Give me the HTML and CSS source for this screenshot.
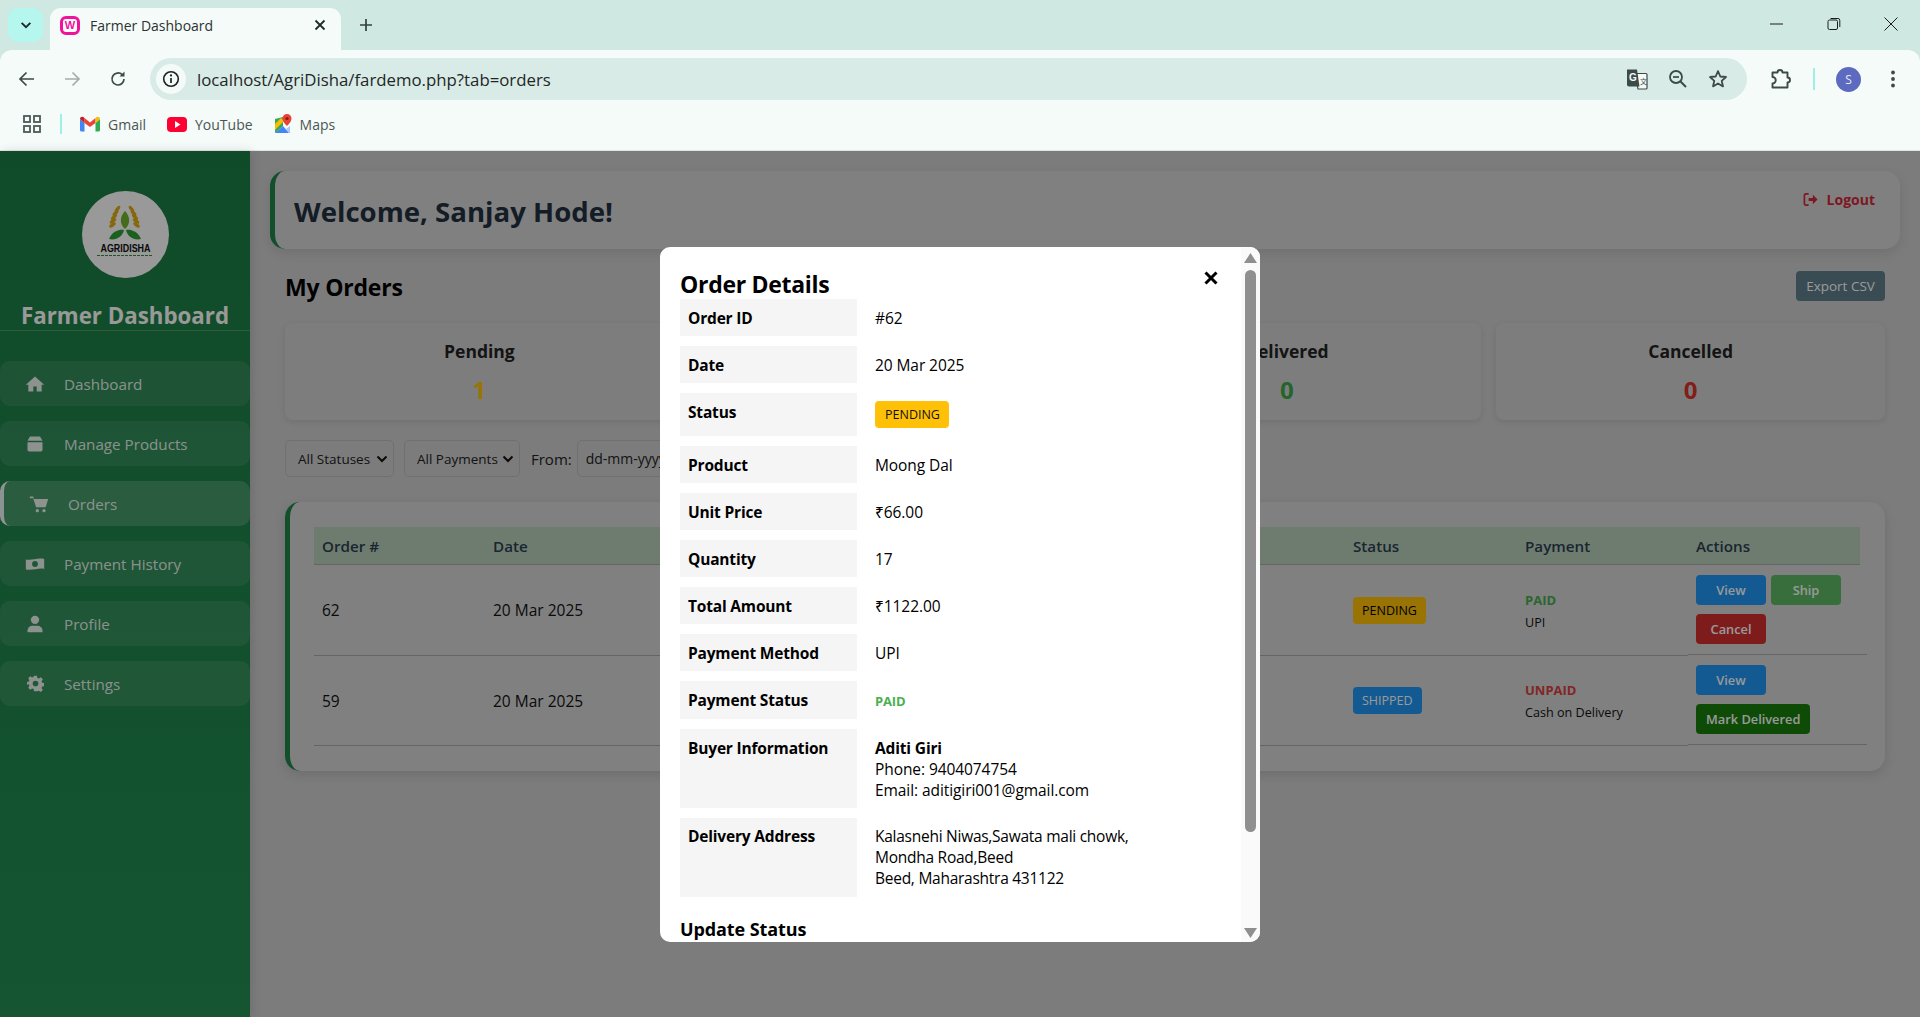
FILE: index.html
```html
<!DOCTYPE html>
<html lang="en">
<head>
<meta charset="utf-8">
<title>Farmer Dashboard</title>
<link rel="stylesheet" href="styles.css">
</head>
<body>
<header class="browser">
  <div class="tabstrip">
    <button class="tab-search"><svg viewBox="0 0 16 16" width="14" height="14"><path d="M3 5.500 8 10.500 13 5.500" fill="none" stroke="#1c2b2a" stroke-width="2.200"/></svg></button>
    <div class="tab">
      <span class="favicon">W</span>
      <span class="tab-title">Farmer Dashboard</span>
      <svg class="tab-x" viewBox="0 0 12 12" width="12" height="12"><path d="M1.500 1.500 10.500 10.500M10.500 1.500 1.500 10.500" stroke="#1f2b2a" stroke-width="1.800"/></svg>
    </div>
    <svg class="new-tab" viewBox="0 0 14 14" width="14" height="14"><path d="M7 1V13M1 7H13" stroke="#33403f" stroke-width="1.700"/></svg>
    <div class="win-controls">
      <svg viewBox="0 0 14 14" width="14" height="14"><path d="M0 7H13" stroke="#1d1d1d" stroke-width="1"/></svg>
      <svg viewBox="0 0 14 14" width="14" height="14"><rect x="1" y="3" width="9.500" height="9.500" rx="1.500" fill="none" stroke="#1d1d1d"/><path d="M3.500 1.500H11a1.800 1.800 0 0 1 1.800 1.800V10" fill="none" stroke="#1d1d1d"/></svg>
      <svg viewBox="0 0 14 14" width="14" height="14"><path d="M.5.5 13.500 13.500M13.500.5.5 13.500" stroke="#1d1d1d" stroke-width="1"/></svg>
    </div>
  </div>
  <div class="toolbar">
    <svg class="tb-icon" viewBox="0 0 18 18" width="18" height="18"><path d="M16 9H2.500M8.500 2.500 2 9l6.500 6.500" fill="none" stroke="#3c4a48" stroke-width="1.700"/></svg>
    <svg class="tb-icon" viewBox="0 0 18 18" width="18" height="18"><path d="M2 9H15.500M9.500 2.500 16 9l-6.500 6.500" fill="none" stroke="#a4adab" stroke-width="1.700"/></svg>
    <svg class="tb-icon" viewBox="0 0 18 18" width="18" height="18"><path d="M15 9a6 6 0 1 1-1.800-4.300" fill="none" stroke="#3c4a48" stroke-width="1.700"/><path d="M15.500 1.500V6.500H10.500z" fill="#3c4a48"/></svg>
    <div class="omnibox">
      <span class="info-chip"><svg viewBox="0 0 18 18" width="18" height="18"><circle cx="9" cy="9" r="7.300" fill="none" stroke="#1c2322" stroke-width="1.600"/><path d="M9 8v5" stroke="#1c2322" stroke-width="1.700"/><circle cx="9" cy="5.400" r="1.100" fill="#1c2322"/></svg></span>
      <span class="url">localhost/AgriDisha/fardemo.php?tab=orders</span>
      <span class="omni-icons">
        <svg viewBox="0 0 22 22" width="22" height="22"><path d="M9 5.500h11a1 1 0 0 1 1 1V20a1 1 0 0 1-1 1h-8z" fill="#f4faf8" stroke="#3c4a48" stroke-width="1.200"/><path d="M1 1.500h10l2.500 17H3a2 2 0 0 1-2-2z" fill="#3c4a48"/><text x="3" y="13" class="g-glyph">G</text><text x="14" y="16" class="t-glyph">文</text></svg>
        <svg viewBox="0 0 20 20" width="20" height="20"><circle cx="8" cy="8" r="6" fill="none" stroke="#3c4a48" stroke-width="1.800"/><path d="M12.500 12.500 18 18" stroke="#3c4a48" stroke-width="2"/><path d="M5 8H11" stroke="#3c4a48" stroke-width="1.700"/></svg>
        <svg viewBox="0 0 20 20" width="20" height="20"><path d="M10 2.200 12.300 7.500 18 8 13.700 11.800 15 17.400 10 14.400 5 17.400 6.300 11.800 2 8 7.700 7.500z" fill="none" stroke="#3c4a48" stroke-width="1.800" stroke-linejoin="round"/></svg>
      </span>
    </div>
    <svg class="ext-icon" viewBox="0 0 22 22" width="22" height="22"><path d="M2.500 4.500h5a2.500 2.500 0 0 1 5 0h5v5a2.500 2.500 0 0 1 0 5v5h-15v-4a2.800 2.800 0 0 0 0-6.500z" fill="none" stroke="#3c4a48" stroke-width="1.900" stroke-linejoin="round"/></svg>
    <span class="tb-sep"></span>
    <span class="avatar">S</span>
    <svg class="kebab" viewBox="0 0 6 18" width="6" height="18"><circle cx="3" cy="2.500" r="1.900" fill="#3c4a48"/><circle cx="3" cy="9" r="1.900" fill="#3c4a48"/><circle cx="3" cy="15.500" r="1.900" fill="#3c4a48"/></svg>
  </div>
  <div class="bookmarks">
    <svg class="apps" viewBox="0 0 18 18" width="18" height="18"><g fill="none" stroke="#4c5957" stroke-width="1.800"><rect x="1" y="1" width="6" height="6"/><rect x="11" y="1" width="6" height="6"/><rect x="1" y="11" width="6" height="6"/><rect x="11" y="11" width="6" height="6"/></g></svg>
    <span class="bm-sep"></span>
    <span class="bm"><svg viewBox="0 0 20 16" width="20" height="16"><path d="M0 3v11a1.500 1.500 0 0 0 1.500 1.500H4.500V7z" fill="#4285f4"/><path d="M20 3v11a1.500 1.500 0 0 1-1.500 1.500H15.500V7z" fill="#34a853"/><path d="M4.500 7V2L10 6.500 15.500 2V7L10 11z" fill="#ea4335"/><path d="M0 3C0 .8 2.700-.2 4.500 2V7z" fill="#c5221f"/><path d="M20 3c0-2.200-2.700-3.200-4.500-1V7z" fill="#fbbc04"/></svg>Gmail</span>
    <span class="bm"><svg viewBox="0 0 20 15" width="20" height="15"><rect width="20" height="15" rx="4" fill="#ff0033"/><path d="M8 4v7l5.500-3.500z" fill="#fff"/></svg>YouTube</span>
    <span class="bm"><svg viewBox="0 0 18 20" width="18" height="20"><path d="M1 5 9 3v9l-8 7z" fill="#34a853"/><path d="M1 19 9 12l6 7z" fill="#4285f4"/><path d="M1 10 7 4l3 3-9 9z" fill="#fbbc04"/><path d="M15 19l-3-4 4-3v7z" fill="#a8c7fa"/><path d="M13 0a4.500 4.500 0 0 1 4.500 4.500C17.500 8 13 12 13 12S8.500 8 8.500 4.500A4.500 4.500 0 0 1 13 0z" fill="#ea4335"/><circle cx="13" cy="4.500" r="1.600" fill="#8c1c13"/></svg>Maps</span>
  </div>
</header>

<div class="page">
  <aside class="sidebar">
    <div class="side-head">
      <svg class="logo" viewBox="0 0 87 87" width="87" height="87">
        <circle cx="43.500" cy="43.500" r="43.500" fill="#fff"/>
        <g fill="#e0ad14">
          <ellipse cx="30.500" cy="34" rx="3.800" ry="1.700" transform="rotate(-35 30.500 34)"/><ellipse cx="31" cy="30" rx="3.800" ry="1.700" transform="rotate(-35 31 30)"/><ellipse cx="32" cy="26" rx="3.800" ry="1.700" transform="rotate(-40 32 26)"/><ellipse cx="33.500" cy="22" rx="3.800" ry="1.700" transform="rotate(-45 33.500 22)"/><ellipse cx="35.500" cy="18" rx="3.800" ry="1.700" transform="rotate(-50 35.500 18)"/>
          <ellipse cx="54.500" cy="34" rx="3.800" ry="1.700" transform="rotate(35 54.500 34)"/><ellipse cx="54" cy="30" rx="3.800" ry="1.700" transform="rotate(35 54 30)"/><ellipse cx="53" cy="26" rx="3.800" ry="1.700" transform="rotate(40 53 26)"/><ellipse cx="51.500" cy="22" rx="3.800" ry="1.700" transform="rotate(45 51.500 22)"/><ellipse cx="49.500" cy="18" rx="3.800" ry="1.700" transform="rotate(50 49.500 18)"/>
        </g>
        <path d="M43 20C38 25 37 33 43 38 49 33 48 25 43 20z" fill="#74b52e"/>
        <path d="M27 48C30 40 38 38 42 39 41 45 34 50 27 48z" fill="#2fa038"/>
        <path d="M59 48C56 40 48 38 44 39 45 45 52 50 59 48z" fill="#2fa038"/>
        <text x="43.500" y="61" class="logo-text" textLength="50" lengthAdjust="spacingAndGlyphs">AGRIDISHA</text>
        <path d="M15 64.500H70" stroke="#3c8d40" stroke-width="1" stroke-dasharray="3 1"/>
      </svg>
      <h2 class="side-title">Farmer Dashboard</h2>
    </div>
    <nav class="side-nav">
      <a class="nav-item"><svg viewBox="0 0 24 24" width="20" height="20"><path d="M12 3 1 13h3v8h6v-6h4v6h6v-8h3z"/></svg>Dashboard</a>
      <a class="nav-item"><svg viewBox="0 0 24 24" width="20" height="20"><path d="M6 3h12l3 5H3zM3 10h18v9a2 2 0 0 1-2 2H5a2 2 0 0 1-2-2z"/></svg>Manage Products</a>
      <a class="nav-item nav-active"><svg viewBox="0 0 24 24" width="20" height="20"><path d="M1 3h4l.8 3H23l-3 10H8.500L5 5H1z"/><circle cx="10" cy="20" r="2"/><circle cx="18" cy="20" r="2"/></svg>Orders</a>
      <a class="nav-item"><svg viewBox="0 0 24 24" width="20" height="20"><path fill-rule="evenodd" d="M1 6.500c6 2 14-2.500 22-.5v12c-6-2-14 2.500-22 .5zM12 8.500a3.500 3.500 0 1 0 0 7 3.500 3.500 0 0 0 0-7z"/></svg>Payment History</a>
      <a class="nav-item"><svg viewBox="0 0 24 24" width="20" height="20"><circle cx="12" cy="7" r="5"/><path d="M3 22v-2a6 6 0 0 1 6-6h6a6 6 0 0 1 6 6v2z"/></svg>Profile</a>
      <a class="nav-item"><svg viewBox="0 0 24 24" width="17" height="17"><path fill-rule="evenodd" d="M10 1h4l.7 3.200 2 .8 2.800-1.700 2.800 2.800-1.700 2.800.8 2 3.200.7v4l-3.200.7-.8 2 1.700 2.800-2.800 2.800-2.800-1.700-2 .8L14 23h-4l-.7-3.200-2-.8-2.800 1.700-2.800-2.800 1.700-2.800-.8-2L-.6 14v-4l3.200-.7.8-2L1.700 4.500l2.800-2.800 2.800 1.700 2-.8zM12 8a4 4 0 1 0 0 8 4 4 0 0 0 0-8z"/></svg>Settings</a>
    </nav>
  </aside>

  <main class="main">
    <section class="welcome">
      <h1>Welcome, Sanjay Hode!</h1>
      <a class="logout"><svg viewBox="0 0 16 16" width="15" height="15"><path d="M6 2H3a1.500 1.500 0 0 0-1.500 1.500v9A1.500 1.500 0 0 0 3 14h3" fill="none" stroke="currentColor" stroke-width="1.800"/><path d="M6 6.500h4.500V3L15.500 8l-5 5V9.500H6z" fill="currentColor"/></svg>Logout</a>
    </section>
    <section class="content">
      <div class="orders-head">
        <h2>My Orders</h2>
        <button class="export">Export CSV</button>
      </div>
      <div class="stats">
        <div class="stat"><h4>Pending</h4><strong class="c-pending">1</strong></div>
        <div class="stat"></div>
        <div class="stat"><h4>Delivered</h4><strong class="c-delivered">0</strong></div>
        <div class="stat"><h4>Cancelled</h4><strong class="c-cancelled">0</strong></div>
      </div>
      <div class="filters">
        <select class="sel-status"><option>All Statuses</option></select>
        <select class="sel-pay"><option>All Payments</option></select>
        <label>From:</label>
        <input class="date" type="text" value="dd-mm-yyyy" readonly>
      </div>
      <div class="table-card">
        <table class="orders">
          <colgroup><col class="w-order"><col class="w-date"><col class="w-mid"><col class="w-status"><col class="w-pay"><col class="w-act"></colgroup>
          <thead><tr><th>Order #</th><th>Date</th><th></th><th>Status</th><th>Payment</th><th>Actions</th></tr></thead>
          <tbody>
            <tr>
              <td>62</td><td>20 Mar 2025</td><td></td>
              <td><span class="badge badge-pending">PENDING</span></td>
              <td><b class="paid">PAID</b><small>UPI</small></td>
              <td class="act-cell"><div class="row-actions"><button class="btn b-blue">View</button><button class="btn b-green">Ship</button><button class="btn b-red">Cancel</button></div></td>
            </tr>
            <tr>
              <td>59</td><td>20 Mar 2025</td><td></td>
              <td><span class="badge badge-shipped">SHIPPED</span></td>
              <td><b class="unpaid">UNPAID</b><small>Cash on Delivery</small></td>
              <td class="act-cell"><div class="row-actions"><button class="btn b-blue">View</button><button class="btn b-dark">Mark Delivered</button></div></td>
            </tr>
          </tbody>
        </table>
      </div>
    </section>
  </main>

  <div class="overlay">
    <div class="modal">
      <svg class="modal-x" viewBox="0 0 14 14" width="14" height="14"><path d="M1.500 1.500 12.500 12.500M12.500 1.500 1.500 12.500" stroke="#000" stroke-width="3"/></svg>
      <h2>Order Details</h2>
      <dl class="details">
        <dt>Order ID</dt><dd>#62</dd>
        <dt>Date</dt><dd>20 Mar 2025</dd>
        <dt>Status</dt><dd class="dd-badge"><span class="badge badge-modal">PENDING</span></dd>
        <dt>Product</dt><dd>Moong Dal</dd>
        <dt>Unit Price</dt><dd>₹66.00</dd>
        <dt>Quantity</dt><dd>17</dd>
        <dt>Total Amount</dt><dd>₹1122.00</dd>
        <dt>Payment Method</dt><dd>UPI</dd>
        <dt>Payment Status</dt><dd><b class="paid-modal">PAID</b></dd>
        <dt>Buyer Information</dt><dd><b>Aditi Giri</b><br>Phone: 9404074754<br>Email: aditigiri001@gmail.com</dd>
        <dt class="dt-address">Delivery Address</dt><dd class="dd-address">Kalasnehi Niwas,Sawata mali chowk,<br>Mondha Road,Beed<br>Beed, Maharashtra 431122</dd>
      </dl>
      <h3>Update Status</h3>
      <div class="scrollbar">
        <svg viewBox="0 0 13 10" width="13" height="10"><path d="M6.500 0 13 10H0z" fill="#8f8f8f"/></svg>
        <span class="thumb"></span>
        <svg class="arrow-down" viewBox="0 0 13 10" width="13" height="10"><path d="M6.500 10 13 0H0z" fill="#8f8f8f"/></svg>
      </div>
    </div>
  </div>
</div>
</body>
</html>
```
FILE: styles.css
```css
* { box-sizing: border-box; }
html, body { margin: 0; height: 1017px; overflow: hidden; }
body { font-family: "Open Sans", "Noto Sans", "Liberation Sans", sans-serif; font-stretch: 94%; color: #222; background: #cfcfcf; }

/* browser chrome */
.browser { height: 151px; background: #cfe8e2; display: flex; flex-direction: column; border-bottom: 1px solid #dfe6e3; }
.tabstrip { height: 50px; display: flex; align-items: flex-end; padding-left: 8px; flex: none; }
.tab-search { width: 35px; height: 34px; margin-bottom: 8px; border: 0; border-radius: 10px; background: #b5f6ef; display: flex; align-items: center; justify-content: center; padding: 0; }
.tab { position: relative; width: 291px; height: 42px; margin-left: 7px; background: #f5fbf9; border-radius: 11px 11px 0 0; display: flex; align-items: center; padding: 0 15px 8px 10px; }
.favicon { width: 20px; height: 19px; border: 3px solid #f2119b; border-radius: 6px; color: #f2119b; background: #fff; font: 700 11px/13px "Liberation Sans", sans-serif; text-align: center; flex: none; }
.tab-title { font-size: 14px; margin-left: 10px; color: #2a3331; flex: 1; white-space: nowrap; }
.new-tab { margin: 0 0 18px 18px; }
.win-controls { margin: 0 22px 19px auto; display: flex; gap: 43px; }
.toolbar { height: 50px; flex: none; background: #f5fbf9; border-radius: 12px 12px 0 0; display: flex; align-items: center; padding: 8px 0 0 18px; }
.tb-icon { margin-right: 27px; flex: none; }
.tb-icon:nth-child(2) { margin-right: 28px; }
.tb-icon:nth-child(3) { margin-right: 23px; }
.omnibox { width: 1597px; height: 42px; background: #d9ebe6; border-radius: 21px; display: flex; align-items: center; padding: 0 19px 0 6px; flex: none; }
.info-chip { width: 30px; height: 30px; border-radius: 50%; background: #f3faf8; display: flex; align-items: center; justify-content: center; flex: none; }
.url { font-size: 16.800px; color: #1e2726; margin-left: 11px; white-space: nowrap; }
.omni-icons { margin-left: auto; display: flex; align-items: center; gap: 20px; }
.g-glyph { font: 700 10px "Liberation Sans", sans-serif; fill: #f4faf8; }
.t-glyph { font: 7px "Noto Sans CJK SC", sans-serif; fill: #3c4a48; }
.ext-icon { margin-left: 23px; flex: none; }
.tb-sep { width: 2px; height: 22px; background: #9ff0e4; margin-left: 21px; flex: none; }
.avatar { width: 25px; height: 25px; border-radius: 50%; background: #5c6bc0; color: #e8eaf6; font-size: 12px; line-height: 25px; text-align: center; margin-left: 21px; flex: none; }
.kebab { margin-left: 29px; flex: none; }
.bookmarks { height: 50px; flex: none; background: #f5fbf9; display: flex; align-items: center; padding: 0 0 2px 23px; font-size: 14px; color: #4a5654; }
.apps { flex: none; }
.bm-sep { width: 2px; height: 20px; background: #9ff0e4; margin: 0 18px 0 19px; flex: none; }
.bm { display: flex; align-items: center; gap: 8px; margin-right: 21px; white-space: nowrap; }

/* page */
.page { position: relative; height: 866px; display: flex; }
.sidebar { position: relative; z-index: 1; width: 250px; flex: none; background: linear-gradient(180deg, #1c7d45, #238e53); color: #fff; box-shadow: 2px 0 10px rgba(0,0,0,.12); }
.side-head { height: 180px; padding-top: 40px; border-bottom: 1px solid rgba(255,255,255,.2); display: flex; flex-direction: column; align-items: center; }
.logo { flex: none; }
.logo-text { font: 700 11px "Liberation Sans", sans-serif; fill: #111; text-anchor: middle; }
.side-title { font-size: 22.300px; line-height: 30px; font-weight: 700; margin: 23px 0 0; white-space: nowrap; }
.side-nav { display: flex; flex-direction: column; gap: 15px; padding-top: 30px; }
.nav-item { height: 45px; display: flex; align-items: center; padding-left: 25px; background: rgba(255,255,255,.09); border-radius: 10px; color: rgba(255,255,255,.9); font-size: 15.200px; }
.nav-item svg { fill: currentColor; flex: none; margin-right: 19px; }
.nav-item:last-child svg { margin: 0 20px 0 2px; }
.nav-active { background: rgba(255,255,255,.18); border-left: 4px solid rgba(255,255,255,.9); }
.main { flex: 1; min-width: 0; padding: 20px; }
.welcome { height: 78px; background: #d6d6d6; border-left: 5px solid #1e8449; border-radius: 15px; display: flex; justify-content: space-between; padding: 0 25px 0 19px; box-shadow: 0 4px 12px rgba(0,0,0,.1); }
.welcome h1 { margin: 0; font-size: 27.600px; line-height: 81px; font-weight: 700; color: #223040; white-space: nowrap; }
.logout { display: flex; align-items: center; gap: 9px; height: 20px; margin-top: 18px; color: #d0293a; font-weight: 700; font-size: 14px; }
.content { padding: 22px 15px 0; }
.orders-head { display: flex; justify-content: space-between; align-items: center; height: 30px; }
.orders-head h2 { margin: 2px 0 0; font-size: 23px; letter-spacing: -.2px; font-weight: 700; color: #000; }
.export { width: 89px; height: 30px; border: 0; border-radius: 4px; background: #607d8b; color: #fff; font: inherit; font-size: 13.500px; padding: 0; }
.stats { display: grid; grid-template-columns: repeat(4, 1fr); gap: 15px; margin-top: 22px; }
.stat { height: 97px; background: #d1d1d1; border-radius: 8px; text-align: center; box-shadow: 0 2px 6px rgba(0,0,0,.1); padding-top: 15px; }
.stat h4 { margin: 0; font-size: 17.500px; line-height: 26px; font-weight: 700; color: #222; }
.stat strong { display: block; margin-top: 11px; font-size: 24px; line-height: 30px; font-weight: 700; }
.c-pending { color: #ffc107; } .c-delivered { color: #3aa84c; } .c-cancelled { color: #d8322c; }
.filters { display: flex; align-items: center; margin-top: 20px; height: 37px; font-size: 15px; color: #222; }
.filters select { appearance: none; height: 37px; border: 1px solid #bbb; border-radius: 5px; background: #cfcfcf url("data:image/svg+xml,%3Csvg xmlns='http://www.w3.org/2000/svg' width='12' height='8'%3E%3Cpath d='M1.500 1.500 6 6l4.500-4.500' fill='none' stroke='%23111' stroke-width='2'/%3E%3C/svg%3E") no-repeat right 5px center; font: inherit; font-size: 13.500px; color: #222; padding: 0 4px 0 12px; }
.sel-status { width: 109px; margin-right: 10px; }
.sel-pay { width: 116px; margin-right: 11px; }
.filters label { margin-right: 5px; }
.date { width: 160px; height: 37px; border: 1px solid #bbb; border-radius: 5px; background: #cfcfcf; font: inherit; font-size: 14px; color: #222; padding: 0 8px; }
.table-card { margin-top: 25px; height: 269px; background: #d6d6d6; border-left: 5px solid #1e8449; border-radius: 15px; padding: 25px 25px 0 24px; box-shadow: 0 4px 12px rgba(0,0,0,.12); }
.orders { width: 1546px; table-layout: fixed; border-collapse: separate; border-spacing: 0; font-size: 15.500px; }
.w-order { width: 171px; } .w-date { width: 200px; } .w-mid { width: 660px; } .w-status { width: 172px; } .w-pay { width: 171px; } .w-act { width: 172px; }
.orders th { height: 38px; background: #b8cfbb; text-align: left; font-weight: 600; color: #2c3e50; padding: 0 8px; border-bottom: 1px solid #a9a9a9; font-size: 15.200px; }
.orders td { height: 90px; padding: 0 8px; border-bottom: 1px solid #a9a9a9; vertical-align: middle; color: #111; white-space: nowrap; }
.orders tr:first-child td { height: 91px; }
.orders td.act-cell { padding: 0; border-bottom: 0; vertical-align: top; }
.row-actions { width: 179px; height: 90px; display: flex; flex-wrap: wrap; align-content: flex-start; gap: 9px 5px; padding: 10px 8px; border-bottom: 1px solid #a9a9a9; }
tr + tr .row-actions { margin-top: -1px; }
.btn { height: 30px; min-width: 70px; border: 0; border-radius: 4px; font: inherit; font-size: 12.800px; font-weight: 600; color: #fff; padding: 0 10px; white-space: nowrap; }
.b-blue { background: #2196f3; } .b-green { background: #5cb864; } .b-red { background: #d32f2f; } .b-dark { background: #177d0d; }
.badge { display: inline-block; height: 27px; line-height: 27px; border-radius: 4px; padding: 0 9px; font-size: 12.500px; }
.badge-pending { background: #ffc107; color: #000; }
.badge-shipped { background: #2196f3; color: #fff; }
.badge-modal { display: block; width: 74px; padding: 0 10px; background: #ffc107; color: #111; }
.orders b { display: block; font-size: 13px; line-height: 21px; padding-top: 2px; font-weight: 700; }
.orders small { display: block; font-size: 12.600px; line-height: 21px; margin-top: 1px; color: #111; }
.paid { color: #49a84f; } .unpaid { color: #d84040; }

/* modal */
.overlay { position: absolute; inset: 0; z-index: 2; background: rgba(0,0,0,.4); display: flex; justify-content: center; align-items: flex-start; padding-top: 96px; }
.modal { position: relative; width: 600px; height: 695px; background: #fff; border-radius: 10px; padding: 20px; overflow: hidden; color: #000; }
.scrollbar { position: absolute; top: 0; right: 0; bottom: 0; width: 19px; background: #fafafa; display: flex; flex-direction: column; align-items: center; padding-top: 6px; }
.thumb { width: 11px; height: 562px; margin-top: 7px; background: #8f8f8f; border-radius: 6px; flex: none; }
.arrow-down { margin-top: 96px; flex: none; }
.modal-x { position: absolute; top: 24px; left: 544px; }
.modal h2 { margin: 0 0 -2px; font-size: 23px; letter-spacing: -.3px; line-height: 34px; font-weight: 700; }
.details { display: grid; grid-template-columns: 177px 1fr; gap: 10px; margin: 0; font-size: 15.500px; letter-spacing: -.08px; line-height: 21px; }
.details dt { background: #f5f5f5; padding: 9px 8px 7px; font-weight: 700; letter-spacing: -.18px; }
.details dd { margin: 0; padding: 9px 8px 7px; }
.details .dd-badge { padding: 8px; letter-spacing: 0; }
.details .dt-address { padding: 8px; }
.details .dd-address { padding: 8px; letter-spacing: -.26px; }
.details dd b { font-weight: 700; letter-spacing: -.15px; }
.paid-modal { color: #4caf50; font-size: 13px; }
.modal h3 { margin: 19px 0 0; font-size: 18px; line-height: 26px; font-weight: 700; letter-spacing: -.1px; }
```
